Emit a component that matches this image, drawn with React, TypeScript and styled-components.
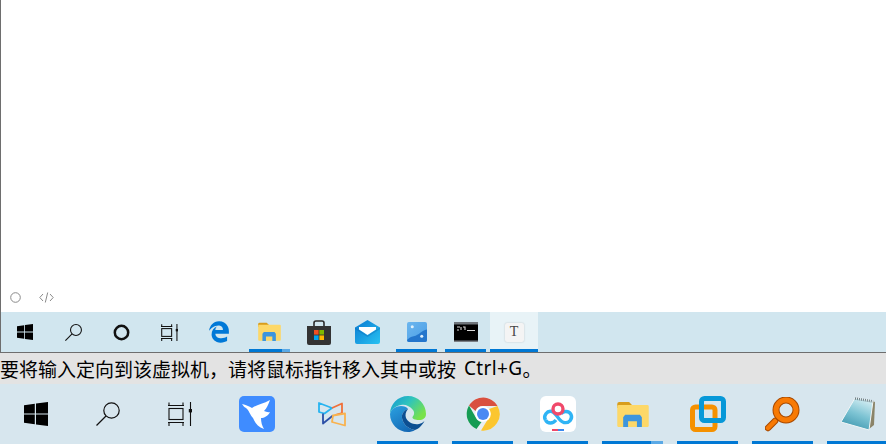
import React from "react";
import styled, { createGlobalStyle } from "styled-components";
import { FaEdgeLegacy } from "react-icons/fa6";

const Global = createGlobalStyle`
  html, body { margin: 0; padding: 0; background: #fff; overflow: hidden; }
  #root { width: 886px; height: 444px; }
`;

const Page = styled.div`
  width: 886px;
  height: 444px;
  display: flex;
  flex-direction: column;
  overflow: hidden;
  font-family: "Noto Sans CJK SC", "Liberation Sans", sans-serif;
`;

const GuestScreen = styled.div`
  height: 353px;
  flex: none;
  display: flex;
  flex-direction: column;
  border-left: 1px solid #6e6e6e;
  border-bottom: 1px solid #6e6e6e;
  box-sizing: border-box;
`;

const Desktop = styled.div`
  flex: 1;
  background: #fff;
  display: flex;
  align-items: flex-end;
  gap: 18px;
  padding: 0 0 9px 9px;
`;

const CornerGlyph = styled.span`
  display: flex;
  color: #8a8a8a;
`;

const GuestBar = styled.div`
  height: 40px;
  flex: none;
  display: flex;
  background: #d1e6ef;
`;

const GuestSlot = styled.div<{ $w: number; $active?: boolean }>`
  width: ${(p) => p.$w}px;
  flex: none;
  display: grid;
  grid-template-rows: 1fr 3px;
  padding-top: 3px;
  box-sizing: border-box;
  background: ${(p) => (p.$active ? "#e8f3f7" : "transparent")};
`;

const Glyph = styled.div`
  display: flex;
  align-items: center;
  justify-content: center;
`;

const Indicator = styled.div<{ $on?: boolean; $inset: number; $part?: number }>`
  margin: 0 ${(p) => p.$inset}px;
  background: ${(p) =>
    !p.$on
      ? "transparent"
      : p.$part
      ? `linear-gradient(90deg, #0078d4 ${p.$part}%, #5aa9e6 ${p.$part}%)`
      : "#0078d4"};
`;

const StatusBar = styled.div`
  height: 31px;
  flex: none;
  background: #e3e3e3;
  display: flex;
  align-items: center;
  font-size: 19px;
  line-height: 31px;
  color: #000;
  white-space: pre;
`;

const LatinRun = styled.span`
  font-family: "Noto Sans", sans-serif;
  letter-spacing: 0.35px;
  margin-left: 8px;
`;

const HostBar = styled.div`
  height: 60px;
  flex: none;
  display: flex;
  background: #d7e6ee;
`;

const HostSlot = styled.div<{ $w: number }>`
  width: ${(p) => p.$w}px;
  flex: none;
  display: grid;
  grid-template-rows: 1fr 3px;
  padding-top: 3px;
  box-sizing: border-box;
`;

const TileLetter = styled.div`
  width: 19px;
  height: 19px;
  background: #f4f4f4;
  border-radius: 2px;
  box-shadow: 0 0 2px rgba(0, 0, 0, 0.2);
  display: flex;
  align-items: center;
  justify-content: center;
  font-family: "Liberation Serif", serif;
  font-size: 14px;
  color: #444;
`;

const WinIcon = ({ s }: { s: number }) => (
  <svg width={s} height={s} viewBox="0 0 24 24">
    <path d="M0 3.3 10.8 1.8V11.4H0ZM12 1.6 24 0V11.4H12ZM0 12.6H10.8V22.2L0 20.7ZM12 12.6H24V24L12 22.4Z" fill="#000" />
  </svg>
);

const SearchIcon = ({ s, w }: { s: number; w: number }) => (
  <svg width={s} height={s} viewBox="0 0 24 24" fill="none" stroke="#111" strokeWidth={w}>
    <circle cx="15.500" cy="8.500" r="7.700" />
    <path d="M10 14 .5 23.500" />
  </svg>
);

const TaskIcon = ({ s, w }: { s: number; w: number }) => (
  <svg width={s} height={s} viewBox="0 0 24 24" fill="none" stroke="#111" strokeWidth={w}>
    <path d="M0 3.500H16M1 .5V3.500M15 .5V3.500" />
    <rect x="1" y="6.500" width="14" height="11" />
    <path d="M0 20.500H16M1 20.500V24M15 20.500V24" />
    <path d="M22.500 0V24" />
    <rect x="20.800" y="7" width="3.400" height="3.400" fill="#111" stroke="none" />
  </svg>
);

const FolderIcon = ({ s }: { s: number }) => (
  <svg width={s} height={s * 0.83} viewBox="0 0 32 27">
    <path d="M0 3a2 2 0 0 1 2-2h10l3 3v3H0Z" fill="#d89d1c" />
    <rect x="0" y="4" width="32" height="22.500" rx="1.500" fill="#fdd868" />
    <path d="M6 27V16.500L8 14H23L25 16.500V27H20V20.500H11V27Z" fill="#3d95dd" />
  </svg>
);

const StoreIcon = () => (
  <svg width="24" height="25" viewBox="0 0 24 25">
    <path d="M7 6V3a2 2 0 0 1 2-2h6a2 2 0 0 1 2 2v3" fill="none" stroke="#2b2b2b" strokeWidth="1.600" />
    <path d="M0 6H24V23a2 2 0 0 1-2 2H2a2 2 0 0 1-2-2Z" fill="#333" />
    <rect x="7" y="10" width="4.600" height="4.600" fill="#f25022" />
    <rect x="12.400" y="10" width="4.600" height="4.600" fill="#7fba00" />
    <rect x="7" y="15.400" width="4.600" height="4.600" fill="#00a4ef" />
    <rect x="12.400" y="15.400" width="4.600" height="4.600" fill="#ffb900" />
  </svg>
);

const MailIcon = () => (
  <svg width="25" height="24" viewBox="0 0 25 24">
    <defs>
      <linearGradient id="mailG" x1="0" y1="0" x2="1" y2="1">
        <stop offset="0" stopColor="#0a7ad1" />
        <stop offset="1" stopColor="#28c2f2" />
      </linearGradient>
    </defs>
    <path d="M0 7.500 12.500 0 25 7.500V22a2 2 0 0 1-2 2H2a2 2 0 0 1-2-2Z" fill="url(#mailG)" />
    <path d="M4 7H21V9.500L12.500 15 4 9.500Z" fill="#fff" />
    <path d="M0 7.500 12.500 15.500 25 7.500V9L12.500 17 0 9Z" fill="#0b64b0" opacity=".35" />
  </svg>
);

const PanelIcon = () => (
  <svg width="20" height="20" viewBox="0 0 21 21">
    <defs>
      <linearGradient id="panelG" x1="0" y1="0" x2="1" y2="1">
        <stop offset="0" stopColor="#6cb6ee" />
        <stop offset="1" stopColor="#4a9ee6" />
      </linearGradient>
    </defs>
    <rect width="21" height="21" rx="2" fill="url(#panelG)" />
    <path d="M21 8C15 9 13 14 7 15 4 15.500 2 17 0 19V19A2 2 0 0 0 2 21H19a2 2 0 0 0 2-2Z" fill="#2476cc" />
    <circle cx="5.500" cy="5" r="1.600" fill="#dff0fb" />
    <circle cx="15.500" cy="15" r="1.600" fill="#dff0fb" />
  </svg>
);

const CmdIcon = () => (
  <svg width="24" height="20" viewBox="0 0 24 20">
    <rect width="24" height="20" rx="1" fill="#000" />
    <rect width="24" height="2.500" fill="#70767c" />
    <path d="M3 5H6M3 8H5M7 5V8M9 5H11V8M13 8.500H21" stroke="#d8d8d8" strokeWidth="1.100" fill="none" />
    <rect y="18.500" width="24" height="1.500" fill="#7a7f85" />
  </svg>
);

const ThunderIcon = () => (
  <svg width="36" height="36" viewBox="0 0 36 36">
    <rect width="36" height="36" rx="5" fill="#3f8cff" />
    <path d="M3 8C7 9 10 10 13 12 17 9 24 8 31 4 29 9 28 12 25 15 27 16 29 16.500 31 16 29 20 25 22 22 22 22 26 23 30 25 33 19 31 16 27 14 22 11 19 10 14 7 12 5 11 4 9.500 3 8Z" fill="#fff" />
  </svg>
);

const XmindIcon = () => (
  <svg width="32" height="25" viewBox="0 0 32 25" fill="none" strokeWidth="1.800" strokeLinejoin="round">
    <path d="M1 1 14 6 6.500 11.500 1 10Z" stroke="#27b4f0" />
    <path d="M5 11.500V21.500L15 13.500" stroke="#2b4fa6" />
    <path d="M14 6 24 1.500V11L17 13" stroke="#f0703a" />
    <path d="M15 13.500 27 11.500V23.500L14 20 15 13.500Z" stroke="#f9b24e" />
  </svg>
);

const NewEdgeIcon = () => (
  <svg width="36" height="36" viewBox="0 0 36 36">
    <defs>
      <linearGradient id="eA" x1="0" y1="0" x2="1" y2="0.600">
        <stop offset="0" stopColor="#1296d6" />
        <stop offset=".5" stopColor="#2fc4bc" />
        <stop offset="1" stopColor="#78e24a" />
      </linearGradient>
      <linearGradient id="eB" x1="0.100" y1="0" x2="0.700" y2="1">
        <stop offset="0" stopColor="#2a9fdf" />
        <stop offset="1" stopColor="#1468b4" />
      </linearGradient>
    </defs>
    <path d="M0 18C0 8 8 0 18 0 28 0 36 8 36 18 36 22 33 24 29 24 25 24 22 23 22.500 21 24 19 25 17 23 14 20 10 15 8 11 9 5 10 1 14 0 18Z" fill="url(#eA)" />
    <path d="M0 18C1 13 6 10 11 10 14 10 17 11 18 13 14 14 11.500 18 12 22 13 28 18 33 25 34 23 35.500 20 36 18 36 8 36 0 28 0 18Z" fill="url(#eB)" />
    <path d="M12 22C11.500 18 14 14 18 13 15.500 16 15 19 16 22 18 26 23 29 29 28 31 27.500 33 26.500 34.500 25 31.500 30.500 28 33 25 34 18 33 13 28 12 22Z" fill="#0c4f92" />
  </svg>
);

const ChromeIcon = () => (
  <svg width="34" height="34" viewBox="0 0 34 34">
    <circle cx="17" cy="17" r="16.500" fill="#e9eef1" />
    <path d="M3 8.500A16.500 16.500 0 0 1 31.500 9H17A8 8 0 0 0 9.500 14Z" fill="#d9503f" />
    <path d="M3 8.500 9.800 20.500A8 8 0 0 0 15.500 25L10.500 32A16.500 16.500 0 0 1 3 8.500Z" fill="#169c53" />
    <path d="M31.500 9A16.500 16.500 0 0 1 15 33.500L22 22A8 8 0 0 0 23 12Z" fill="#fbc62f" />
    <circle cx="17" cy="17" r="7.800" fill="#fff" />
    <circle cx="17" cy="17" r="6" fill="#4a89f3" />
  </svg>
);

const BaiduIcon = () => (
  <svg width="36" height="36" viewBox="0 0 36 36" fill="none">
    <rect width="36" height="36" rx="6" fill="#fff" />
    <path d="M5.500 24C3 20 7 14 12 15.500 17 17 18 25 24 26.500 29 27.500 33 23 31 18.500 29 14.500 23 14.500 21 18" stroke="#2fb4f5" strokeWidth="3.400" />
    <path d="M5.500 24C7.500 28 13 28 16 24" stroke="#2fb4f5" strokeWidth="3.400" />
    <circle cx="18" cy="13" r="5" stroke="#f0496a" strokeWidth="3.400" />
    <path d="M12 34H18" stroke="#f0496a" strokeWidth="2" />
    <path d="M18 34H24" stroke="#3a8bf0" strokeWidth="2" />
  </svg>
);

const VmwareIcon = () => (
  <svg width="36" height="36" viewBox="0 0 36 36" fill="none">
    <rect x="2.500" y="11" width="22.500" height="22.500" rx="3" stroke="#f59100" strokeWidth="5" />
    <rect x="11.500" y="2.500" width="22" height="22" rx="3" stroke="#0798d8" strokeWidth="5" />
  </svg>
);

const MagnifierIcon = () => (
  <svg width="35" height="35" viewBox="0 0 35 35" fill="none">
    <path d="M10 24 3 31" stroke="#a84a00" strokeWidth="6.500" strokeLinecap="round" />
    <path d="M10 24 3 31" stroke="#f87a04" strokeWidth="4.500" strokeLinecap="round" />
    <circle cx="21" cy="13" r="10" stroke="#a84a00" strokeWidth="7" />
    <circle cx="21" cy="13" r="10" stroke="#f87a04" strokeWidth="5" />
  </svg>
);

const NotepadIcon = () => (
  <svg width="36" height="34" viewBox="0 0 36 34">
    <defs>
      <linearGradient id="noteG" x1="0.700" y1="0" x2="0.300" y2="1">
        <stop offset="0" stopColor="#d5eef3" />
        <stop offset=".5" stopColor="#7cc3d3" />
        <stop offset="1" stopColor="#3d96ae" />
      </linearGradient>
    </defs>
    <path d="M30 3 35 5 34 28 29 32Z" fill="#8b8468" />
    <path d="M15 1 33 4 29 33 1 25Z" fill="url(#noteG)" stroke="#f1f6f7" strokeWidth="1" />
    <path d="M15 1.500 33 4.500" stroke="#6f7f85" strokeWidth="2.600" strokeDasharray="1 1" />
  </svg>
);

const guestTools: { w: number; icon: React.ReactNode }[] = [
  { w: 48, icon: <WinIcon s={16} /> },
  { w: 48, icon: <SearchIcon s={17} w={1.500} /> },
  { w: 48, icon: (
      <svg width="17" height="17" viewBox="0 0 17 17" fill="none" stroke="#111" strokeWidth="2.500">
        <circle cx="8.500" cy="8.500" r="6.700" />
      </svg>
    ) },
  { w: 48, icon: <TaskIcon s={17} w={1.500} /> },
];

const guestApps: { w: number; icon: React.ReactNode; on?: boolean; active?: boolean; part?: number }[] = [
  { w: 52, icon: <FaEdgeLegacy size={22} color="#0078d7" /> },
  { w: 49, icon: <FolderIcon s={23} />, on: true, part: 80 },
  { w: 49, icon: <StoreIcon /> },
  { w: 49, icon: <MailIcon /> },
  { w: 49, icon: <PanelIcon />, on: true },
  { w: 49, icon: <CmdIcon />, on: true },
  { w: 48, icon: <TileLetter>T</TileLetter>, on: true, active: true },
];

const hostApps: { w: number; icon: React.ReactNode; on?: boolean; part?: number }[] = [
  { w: 72, icon: <WinIcon s={24} /> },
  { w: 72, icon: <SearchIcon s={24} w={1.200} /> },
  { w: 72, icon: <TaskIcon s={24} w={1.100} /> },
  { w: 81, icon: <ThunderIcon /> },
  { w: 73, icon: <XmindIcon /> },
  { w: 75, icon: <NewEdgeIcon />, on: true },
  { w: 75, icon: <ChromeIcon />, on: true },
  { w: 75, icon: <BaiduIcon />, on: true },
  { w: 75, icon: <FolderIcon s={32} />, on: true, part: 80 },
  { w: 75, icon: <VmwareIcon />, on: true },
  { w: 75, icon: <MagnifierIcon />, on: true },
  { w: 75, icon: <NotepadIcon />, on: true },
];

export default function App() {
  return (
    <Page>
      <Global />
      <GuestScreen>
        <Desktop>
          <CornerGlyph>
            <svg width="11" height="11" viewBox="0 0 11 11" fill="none" stroke="currentColor">
              <circle cx="5.500" cy="5.500" r="4.800" />
            </svg>
          </CornerGlyph>
          <CornerGlyph>
            <svg width="15" height="11" viewBox="0 0 15 11" fill="none" stroke="currentColor">
              <path d="M4 2 .8 5.500 4 9M11 2 14.200 5.500 11 9M8.700 .5 6.300 10.500" />
            </svg>
          </CornerGlyph>
        </Desktop>
        <GuestBar>
          {guestTools.map((t, i) => (
            <GuestSlot key={i} $w={t.w}>
              <Glyph>{t.icon}</Glyph>
              <Indicator $inset={4} />
            </GuestSlot>
          ))}
          {guestApps.map((a, i) => (
            <GuestSlot key={i} $w={a.w} $active={a.active}>
              <Glyph>{a.icon}</Glyph>
              <Indicator $on={a.on} $inset={a.active ? 0 : 4} $part={a.part} />
            </GuestSlot>
          ))}
        </GuestBar>
      </GuestScreen>
      <StatusBar>
        要将输入定向到该虚拟机，请将鼠标指针移入其中或按<LatinRun>Ctrl+G</LatinRun>。
      </StatusBar>
      <HostBar>
        {hostApps.map((a, i) => (
          <HostSlot key={i} $w={a.w}>
            <Glyph>{a.icon}</Glyph>
            <Indicator $on={a.on} $inset={7} $part={a.part} />
          </HostSlot>
        ))}
      </HostBar>
    </Page>
  );
}
